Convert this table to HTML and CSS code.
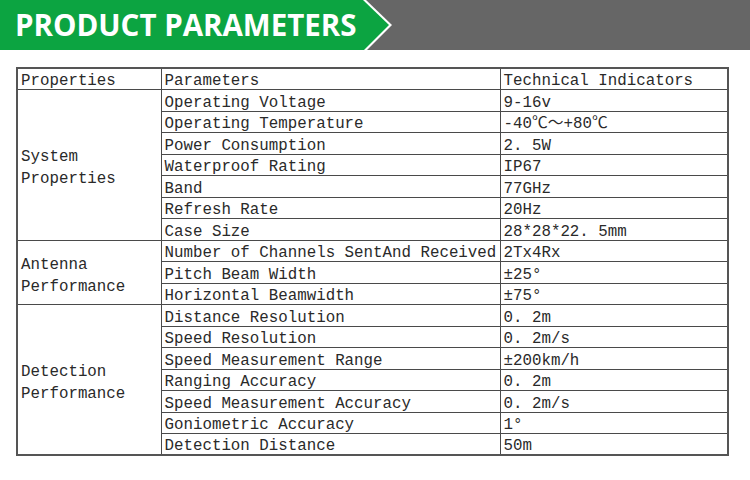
FILE: index.html
```html
<!DOCTYPE html>
<html>
<head>
<meta charset="utf-8">
<link rel="stylesheet" href="styles.css">
</head>
<body>
<header class="banner">
  <div class="tag-edge">
    <div class="tag">
      <h1 class="title">PRODUCT PARAMETERS</h1>
    </div>
  </div>
</header>
<main class="content">
  <table class="params">
    <colgroup>
      <col class="c1"><col class="c2"><col class="c3">
    </colgroup>
    <tr><td>Properties</td><td>Parameters</td><td>Technical Indicators</td></tr>
    <tr><td rowspan="7" class="group">System Properties</td><td>Operating Voltage</td><td>9-16v</td></tr>
    <tr><td>Operating Temperature</td><td>-40℃～+80℃</td></tr>
    <tr><td>Power Consumption</td><td>2. 5W</td></tr>
    <tr><td>Waterproof Rating</td><td>IP67</td></tr>
    <tr><td>Band</td><td>77GHz</td></tr>
    <tr><td>Refresh Rate</td><td>20Hz</td></tr>
    <tr><td>Case Size</td><td>28*28*22. 5mm</td></tr>
    <tr><td rowspan="3" class="group">Antenna Performance</td><td>Number of Channels SentAnd Received</td><td>2Tx4Rx</td></tr>
    <tr><td>Pitch Beam Width</td><td>±25°</td></tr>
    <tr><td>Horizontal Beamwidth</td><td>±75°</td></tr>
    <tr><td rowspan="7" class="group">Detection Performance</td><td>Distance Resolution</td><td>0. 2m</td></tr>
    <tr><td>Speed Resolution</td><td>0. 2m/s</td></tr>
    <tr><td>Speed Measurement Range</td><td>±200km/h</td></tr>
    <tr><td>Ranging Accuracy</td><td>0. 2m</td></tr>
    <tr><td>Speed Measurement Accuracy</td><td>0. 2m/s</td></tr>
    <tr><td>Goniometric Accuracy</td><td>1°</td></tr>
    <tr><td>Detection Distance</td><td>50m</td></tr>
  </table>
</main>
</body>
</html>
```
FILE: styles.css
```css
html, body {
  margin: 0;
  padding: 0;
  background: #ffffff;
}
.banner {
  height: 50px;
  background: #666666;
  display: flex;
}
.tag-edge {
  width: 393px;
  height: 50px;
  background: #ffffff;
  clip-path: polygon(0 0, 366px 0, 392px 25px, 367px 50px, 0 50px);
}
.tag {
  width: 390px;
  height: 50px;
  background: #0ca441;
  clip-path: polygon(0 0, 363px 0, 389px 25px, 364px 50px, 0 50px);
  display: flex;
  align-items: center;
}
.title {
  margin: 0 0 0 15px;
  color: #ffffff;
  font-family: "Open Sans", "Noto Sans", sans-serif;
  font-weight: 700;
  font-size: 29.5px;
  letter-spacing: 0;
  line-height: 1;
}
.content {
  padding: 17px 0 0 16px;
}
.params {
  border-collapse: collapse;
  width: 711px;
  table-layout: fixed;
  border: 2px solid #555555;
  font-family: "Liberation Mono", "Noto Sans CJK SC", monospace;
  font-size: 15.8px;
  color: #2a2a2a;
}
.c1 { width: 144px; }
.c2 { width: 339px; }
.c3 { width: 228px; }
.params tr {
  height: 21.5px;
}
.params td {
  border: 1px solid #4a4a4a;
  padding: 3px 0 0 3px;
  line-height: 16px;
  height: 19px;
  box-sizing: border-box;
  white-space: nowrap;
  overflow: hidden;
  vertical-align: bottom;
}
.params td.group {
  white-space: normal;
  vertical-align: middle;
  line-height: 22px;
  padding-top: 7px;
}
```
